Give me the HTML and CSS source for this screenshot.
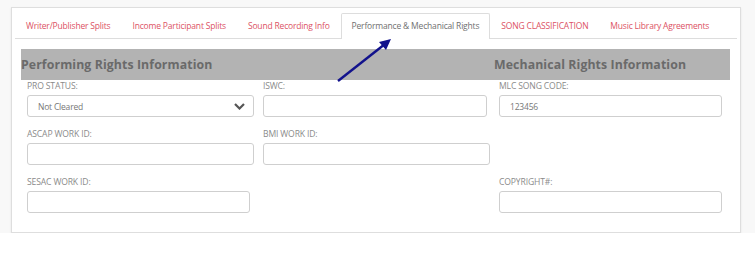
FILE: index.html
```html
<!DOCTYPE html>
<html lang="en">
<head>
    <meta charset="UTF-8">
    <meta name="viewport" content="width=device-width, initial-scale=1.0">
    <title>Performance &amp; Mechanical Rights</title>
    <link rel="stylesheet" href="styles.css">
</head>
<body>
    <div class="page">
        <div class="panel">
            <ul class="tabs">
                <li class="tab">Writer/Publisher Splits</li>
                <li class="tab">Income Participant Splits</li>
                <li class="tab">Sound Recording Info</li>
                <li class="tab active">Performance &amp; Mechanical Rights</li>
                <li class="tab">SONG CLASSIFICATION</li>
                <li class="tab">Music Library Agreements</li>
            </ul>

            <div class="section-head">
                <h3 class="title-left">Performing Rights Information</h3>
                <h3>Mechanical Rights Information</h3>
            </div>

            <div class="fields">
                <div class="field">
                    <label for="pro">PRO STATUS:</label>
                    <div class="select">
                        <span>Not Cleared</span>
                        <svg width="11" height="7" viewBox="0 0 11 7"><path d="M1 1 L5.5 5.5 L10 1" fill="none" stroke="#555" stroke-width="2.2"/></svg>
                    </div>
                </div>
                <div class="field">
                    <label for="iswc">ISWC:</label>
                    <input id="iswc" class="short" type="text">
                </div>
                <div class="field">
                    <label for="mlc">MLC SONG CODE:</label>
                    <input id="mlc" type="text" value="123456">
                </div>

                <div class="field">
                    <label for="ascap">ASCAP WORK ID:</label>
                    <input id="ascap" type="text">
                </div>
                <div class="field">
                    <label for="bmi">BMI WORK ID:</label>
                    <input id="bmi" type="text">
                </div>
                <div class="field"></div>

                <div class="field">
                    <label for="sesac">SESAC WORK ID:</label>
                    <input id="sesac" class="narrow" type="text">
                </div>
                <div class="field"></div>
                <div class="field">
                    <label for="copyright">COPYRIGHT#:</label>
                    <input id="copyright" type="text">
                </div>
            </div>
        </div>

        <!-- annotation arrow pointing at the active tab -->
        <svg class="arrow" width="755" height="262" viewBox="0 0 755 262">
            <line x1="338" y1="81" x2="385" y2="44" stroke="#12128c" stroke-width="2.4"/>
            <path d="M391 39 L379 42 L386 50 Z" fill="#12128c"/>
        </svg>
    </div>
</body>
</html>
```

FILE: styles.css
```css
body {
    margin: 0;
    background-color: #fff;
    font-family: "Open Sans", "Liberation Sans", sans-serif;
}
.page {
    position: relative;
    width: 755px;
    height: 233px;
    background-color: #f8f8f8;
    padding: 7px 0 0 11px;
    box-sizing: border-box;
}
.panel {
    width: 730px;
    height: 226px;
    box-sizing: border-box;
    background-color: #fff;
    border: 1px solid #dedede;
    box-shadow: 0 1px 2px rgba(0, 0, 0, 0.08);
    padding: 5px 3px 0 3px;
}
.tabs {
    list-style: none;
    margin: 0;
    padding: 0;
    display: flex;
    height: 25px;
    border-bottom: 1px solid #ddd;
}
.tab {
    padding: 0 10px;
    border: 1px solid transparent;
    border-bottom: none;
    font-size: 8.5px;
    letter-spacing: -0.18px;
    line-height: 24px;
    color: #dc5264;
    white-space: nowrap;
}
.tab.active {
    color: #707070;
    background-color: #fff;
    border-color: #ddd;
    border-radius: 2px 2px 0 0;
    margin-bottom: -1px;
    height: 25px;
}
.section-head {
    display: flex;
    margin: 10px 7px 0 6px;
    height: 31px;
    background-color: #b3b3b3;
    align-items: center;
}
.section-head h3 {
    margin: 0;
    font-size: 12.3px;
    font-weight: bold;
    color: #6a6a6a;
    letter-spacing: 0.1px;
}
.section-head .title-left {
    width: 473px;
}
.fields {
    display: grid;
    grid-template-columns: 227px 227px 223px;
    column-gap: 9px;
    row-gap: 11px;
    padding: 0 0 0 12px;
}
.field {
    display: flex;
    flex-direction: column;
    min-height: 37px;
}
.field label {
    display: block;
    height: 12px;
    line-height: 12px;
    font-size: 8.6px;
    letter-spacing: -0.15px;
    color: #8a8a8a;
    margin-bottom: 3px;
}
.field input,
.select {
    height: 22px;
    box-sizing: border-box;
    width: 100%;
    border: 1px solid #cfcfcf;
    border-radius: 3px;
    background-color: #fff;
    padding: 0 10px;
    font-family: inherit;
    font-size: 8.5px;
    letter-spacing: -0.2px;
    color: #777;
    outline: none;
}
.field input.short {
    width: 224px;
}
.field input.narrow {
    width: 223px;
}
.select {
    display: flex;
    align-items: center;
    justify-content: space-between;
    padding-right: 8px;
}
.arrow {
    position: absolute;
    left: 0;
    top: 0;
    pointer-events: none;
}
```
